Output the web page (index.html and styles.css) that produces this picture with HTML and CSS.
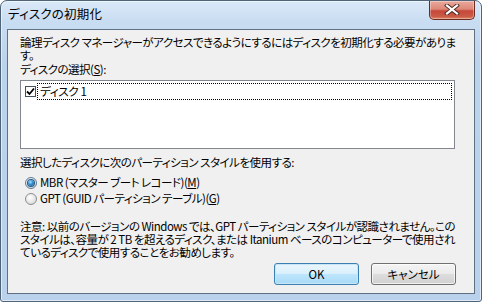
FILE: index.html
```html
<!DOCTYPE html>
<html lang="ja">
<head>
<meta charset="utf-8">
<title>ディスクの初期化</title>
<link rel="stylesheet" href="styles.css">
</head>
<body>
<div class="window">
  <div class="titlebar">
    <span class="title">ディスクの初期化</span>
    <div class="close">
      <svg width="16" height="11" viewBox="0 0 16 11">
        <path d="M3 1.5 L13 9.5 M13 1.5 L3 9.5" stroke="#4a2620" stroke-width="4" stroke-linecap="square" fill="none"/>
        <path d="M3 1.5 L13 9.5 M13 1.5 L3 9.5" stroke="#ffffff" stroke-width="2.2" stroke-linecap="square" fill="none"/>
      </svg>
    </div>
  </div>
  <div class="client">
    <p class="text intro">論理ディスク マネージャーがアクセスできるようにするにはディスクを初期化する必要がありま<br>す。</p>
    <p class="text label">ディスクの選択(<u>S</u>):</p>
    <div class="listbox">
      <div class="item">
        <span class="check">
          <svg width="9" height="9" viewBox="0 0 9 9"><path d="M1 4.5 L3.5 7 L8 1.5" stroke="#000" stroke-width="1.8" fill="none"/></svg>
        </span>
        <span class="item-label">ディスク 1</span>
      </div>
    </div>
    <p class="text label2">選択したディスクに次のパーティション スタイルを使用する:</p>
    <div class="radios">
      <div class="radio-row">
        <span class="radio on"><span class="dot"></span></span>
        <span class="text">MBR (マスター ブート レコード)(<u>M</u>)</span>
      </div>
      <div class="radio-row">
        <span class="radio"></span>
        <span class="text">GPT (GUID パーティション テーブル)(<u>G</u>)</span>
      </div>
    </div>
    <p class="text note">注意: 以前のバージョンの Windows では、GPT パーティション スタイルが認識されません。この<br>スタイルは、容量が 2 TB を超えるディスク、または Itanium ベースのコンピューターで使用され<br>ているディスクで使用することをお勧めします。</p>
    <div class="buttons">
      <div class="btn default">OK</div>
      <div class="btn">キャンセル</div>
    </div>
  </div>
</div>
</body>
</html>
```

FILE: styles.css
```css
html, body {
  margin: 0;
  padding: 0;
  background: #ffffff;
}

body {
  font-family: "Noto Sans CJK JP", "Liberation Sans", sans-serif;
  font-size: 12px;
  color: #000;
}

.window {
  width: 482px;
  height: 302px;
  box-sizing: border-box;
  border: 1px solid #4f6379;
  border-radius: 7px 7px 3px 3px;
  background: linear-gradient(180deg, #dbe9f8 0px, #c9ddf2 20px, #bcd3ec 60px, #b9d1eb 100%);
  padding: 0 6px 7px 6px;
  display: flex;
  flex-direction: column;
  box-shadow: inset 0 0 0 1px rgba(255,255,255,0.55);
}

.titlebar {
  height: 28px;
  display: flex;
  justify-content: space-between;
  align-items: flex-start;
  flex: none;
}

.title {
  padding: 5px 0 0 1px;
  font-size: 12.5px;
  line-height: 16px;
  color: #000;
  font-feature-settings: "palt";
  letter-spacing: 0.2px;
}

.close {
  width: 46px;
  height: 19px;
  box-sizing: border-box;
  border: 1px solid #6d2a22;
  border-top: none;
  border-radius: 0 0 5px 5px;
  background: linear-gradient(180deg, #e9a99c 0%, #dd8878 45%, #c6473a 55%, #c95a44 85%, #e0835f 100%);
  display: flex;
  align-items: center;
  justify-content: center;
  box-shadow: inset 0 0 0 1px rgba(255,255,255,0.35);
}

.close svg {
  display: block;
  margin-top: -1px;
}

.client {
  flex: 1;
  border: 1px solid #5f7183;
  background: #f0f0f0;
  padding: 6px 12px 0 12px;
  display: flex;
  flex-direction: column;
}

.text {
  font-size: 11.5px;
  line-height: 13px;
  white-space: nowrap;
  font-feature-settings: "palt";
  letter-spacing: -0.5px;
  margin: 0;
}

.text u {
  text-decoration: underline;
  text-underline-offset: 1px;
}

.label {
  margin-top: 1px;
}

.listbox {
  margin-top: 4px;
  width: 435px;
  height: 69px;
  box-sizing: border-box;
  border: 1px solid #828790;
  background: #fff;
  padding: 2px 2px 0 3px;
}

.item {
  display: flex;
  align-items: center;
  height: 17px;
}

.check {
  width: 11px;
  height: 11px;
  box-sizing: border-box;
  border: 1px solid #45505e;
  background: #fff;
  display: flex;
  align-items: center;
  justify-content: center;
  margin-left: 1px;
  margin-right: 1px;
}

.check svg {
  display: block;
}

.item-label {
  flex: 1;
  height: 17px;
  box-sizing: border-box;
  border: 1px dotted #000;
  padding: 1px 0 0 2px;
  font-size: 11.5px;
  line-height: 13px;
  letter-spacing: -0.3px;
  font-feature-settings: "palt";
}

.label2 {
  margin-top: 7px;
}

.radios {
  margin-top: 7px;
  padding-left: 5px;
  display: flex;
  flex-direction: column;
  gap: 3px;
}

.radio-row {
  display: flex;
  align-items: center;
  gap: 3px;
  height: 13px;
}

.radio {
  width: 12px;
  height: 12px;
  box-sizing: border-box;
  border-radius: 50%;
  border: 1px solid #8a8e93;
  background: radial-gradient(circle at 40% 35%, #ffffff 0%, #e6e6e6 55%, #cfcfcf 100%);
  display: flex;
  align-items: center;
  justify-content: center;
}

.radio.on {
  border-color: #5a7a99;
}

.dot {
  width: 6px;
  height: 6px;
  border-radius: 50%;
  background: radial-gradient(circle at 40% 35%, #a6e0ff 0%, #2f8ed6 45%, #1b4f80 100%);
  box-shadow: 0 0 0 1px #2b5678;
}

.note {
  margin-top: 15px;
}

.buttons {
  display: flex;
  justify-content: flex-end;
  gap: 12px;
  margin-top: 4px;
  padding-right: 6px;
}

.btn {
  width: 85px;
  height: 22px;
  box-sizing: border-box;
  border: 1px solid #707070;
  border-radius: 3px;
  background: linear-gradient(180deg, #f4f4f4 0%, #ebebeb 48%, #dddddd 52%, #d0d0d0 100%);
  box-shadow: inset 0 0 0 1px rgba(255,255,255,0.7);
  display: flex;
  align-items: center;
  justify-content: center;
  font-size: 11.5px;
  line-height: 13px;
  font-feature-settings: "palt";
}

.btn.default {
  border-color: #3c7fb1;
  background: linear-gradient(180deg, #eaf6fd 0%, #d9f0fc 48%, #bee6fd 52%, #a7d9f5 100%);
  box-shadow: inset 0 0 0 1px #c8e6f8;
}
```
